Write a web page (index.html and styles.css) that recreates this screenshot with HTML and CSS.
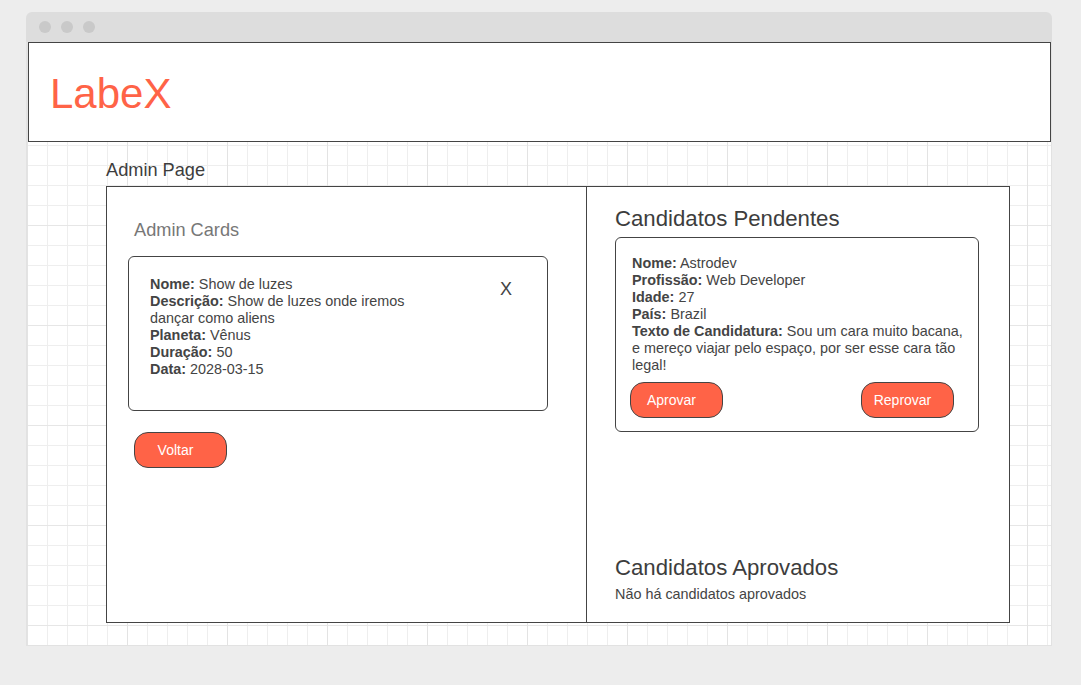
FILE: index.html
```html
<!DOCTYPE html>
<html lang="pt-BR">
<head>
<meta charset="utf-8">
<title>LabeX - Admin</title>
<link rel="stylesheet" href="styles.css">
</head>
<body>
<div class="window">
  <div class="titlebar">
    <span class="dot"></span><span class="dot"></span><span class="dot"></span>
  </div>
  <div class="content">
    <header class="site-header">
      <h1 class="logo">LabeX</h1>
    </header>
    <main class="page">
      <h2 class="page-title">Admin Page</h2>
      <div class="panel">
        <section class="col-left">
          <h3 class="section-title">Admin Cards</h3>
          <div class="trip-card">
            <div class="trip-info">
              <b>Nome:</b> Show de luzes<br>
              <b>Descrição:</b> Show de luzes onde iremos dançar como aliens<br>
              <b>Planeta:</b> Vênus<br>
              <b>Duração:</b> 50<br>
              <b>Data:</b> 2028-03-15
            </div>
            <span class="close">X</span>
          </div>
          <button class="btn btn-back">Voltar</button>
        </section>
        <section class="col-right">
          <div class="block">
            <h3 class="col-title">Candidatos Pendentes</h3>
            <div class="cand-card">
              <div class="cand-info">
                <b>Nome:</b> Astrodev<br>
                <b>Profissão:</b> Web Developer<br>
                <b>Idade:</b> 27<br>
                <b>País:</b> Brazil<br>
                <b>Texto de Candidatura:</b> Sou um cara muito bacana, e mereço viajar pelo espaço, por ser esse cara tão legal!
              </div>
              <div class="actions">
                <button class="btn">Aprovar</button>
                <button class="btn">Reprovar</button>
              </div>
            </div>
          </div>
          <div class="block">
            <h3 class="col-title">Candidatos Aprovados</h3>
            <p class="empty">Não há candidatos aprovados</p>
          </div>
        </section>
      </div>
    </main>
  </div>
</div>
</body>
</html>
```

FILE: styles.css
```css
* { box-sizing: border-box; }

html, body {
  margin: 0;
  padding: 0;
}

body {
  background: #ededed;
  font-family: "Liberation Sans", Arial, sans-serif;
  color: #444;
  padding: 12px 29px 0 26px;
}

.window {
  width: 1026px;
  height: 634px;
  display: flex;
  flex-direction: column;
}

.titlebar {
  height: 30px;
  background: #dddddd;
  border-radius: 6px 6px 0 0;
  display: flex;
  align-items: center;
  gap: 10px;
  padding-left: 13px;
}

.dot {
  width: 12px;
  height: 12px;
  border-radius: 50%;
  background: #c9c9c9;
}

.content {
  flex: 1;
  border: 1px solid #e2e2e2;
  border-top: none;
  background-color: #fff;
  background-image:
    linear-gradient(to right, #e3e3e3 1px, transparent 1px),
    linear-gradient(to bottom, #e6e6e6 1px, transparent 1px),
    linear-gradient(to right, #eeeeee 1px, transparent 1px),
    linear-gradient(to bottom, #eeeeee 1px, transparent 1px);
  background-size: 100px 100px, 100px 100px, 20px 20px, 20px 20px;
  background-position: 0 0, 0 83px, 0 0, 0 3px;
}

.site-header {
  height: 100px;
  margin-left: 1px;
  border: 1px solid #444;
  background: #fff;
  padding: 27px 0 0 21px;
}

.logo {
  margin: 0;
  font-size: 42px;
  line-height: 48px;
  font-weight: normal;
  color: #ff6347;
}

.page {
  padding: 18px 0 0 79px;
}

.page-title {
  margin: 0 0 5px;
  font-size: 18.2px;
  line-height: 21px;
  font-weight: normal;
  color: #3d3d3d;
}

.panel {
  width: 904px;
  height: 437px;
  border: 1px solid #444;
  background: #fff;
  display: flex;
}

.col-left {
  width: 480px;
  border-right: 1px solid #444;
  padding: 33px 0 0 21px;
}

.section-title {
  margin: 0 0 15px 6px;
  font-size: 18.2px;
  line-height: 21px;
  font-weight: normal;
  color: #777;
}

.trip-card {
  width: 420px;
  border: 1px solid #444;
  border-radius: 6px;
  padding: 19px 35px 32px 21px;
  display: flex;
  justify-content: space-between;
  align-items: flex-start;
}

.trip-info, .cand-info {
  font-size: 14.4px;
  line-height: 17px;
}

.trip-info { width: 275px; }

.trip-info b, .cand-info b { font-weight: bold; }

.close {
  font-size: 18px;
  line-height: 21px;
  margin-top: 3px;
  color: #444;
}

.btn {
  width: 93px;
  height: 36px;
  border: 1px solid #444;
  border-radius: 14px;
  background: #ff6347;
  color: #fff;
  font-family: "Liberation Sans", Arial, sans-serif;
  font-size: 14px;
  padding: 0 10px 0 0;
  text-align: center;
}

.btn-back {
  margin: 21px 0 0 6px;
}

.col-right {
  flex: 1;
  padding: 19px 30px 19px 28px;
  display: flex;
  flex-direction: column;
  justify-content: space-between;
}

.col-title {
  margin: 0 0 5px;
  font-size: 22.2px;
  line-height: 26px;
  font-weight: normal;
  color: #3d3d3d;
}

.cand-card {
  border: 1px solid #444;
  border-radius: 6px;
  padding: 17px 12px 13px 16px;
}

.actions {
  display: flex;
  justify-content: space-between;
  margin: 8px 12px 0 -2px;
}

.empty {
  margin: 0;
  font-size: 14.4px;
  line-height: 17px;
}
```
